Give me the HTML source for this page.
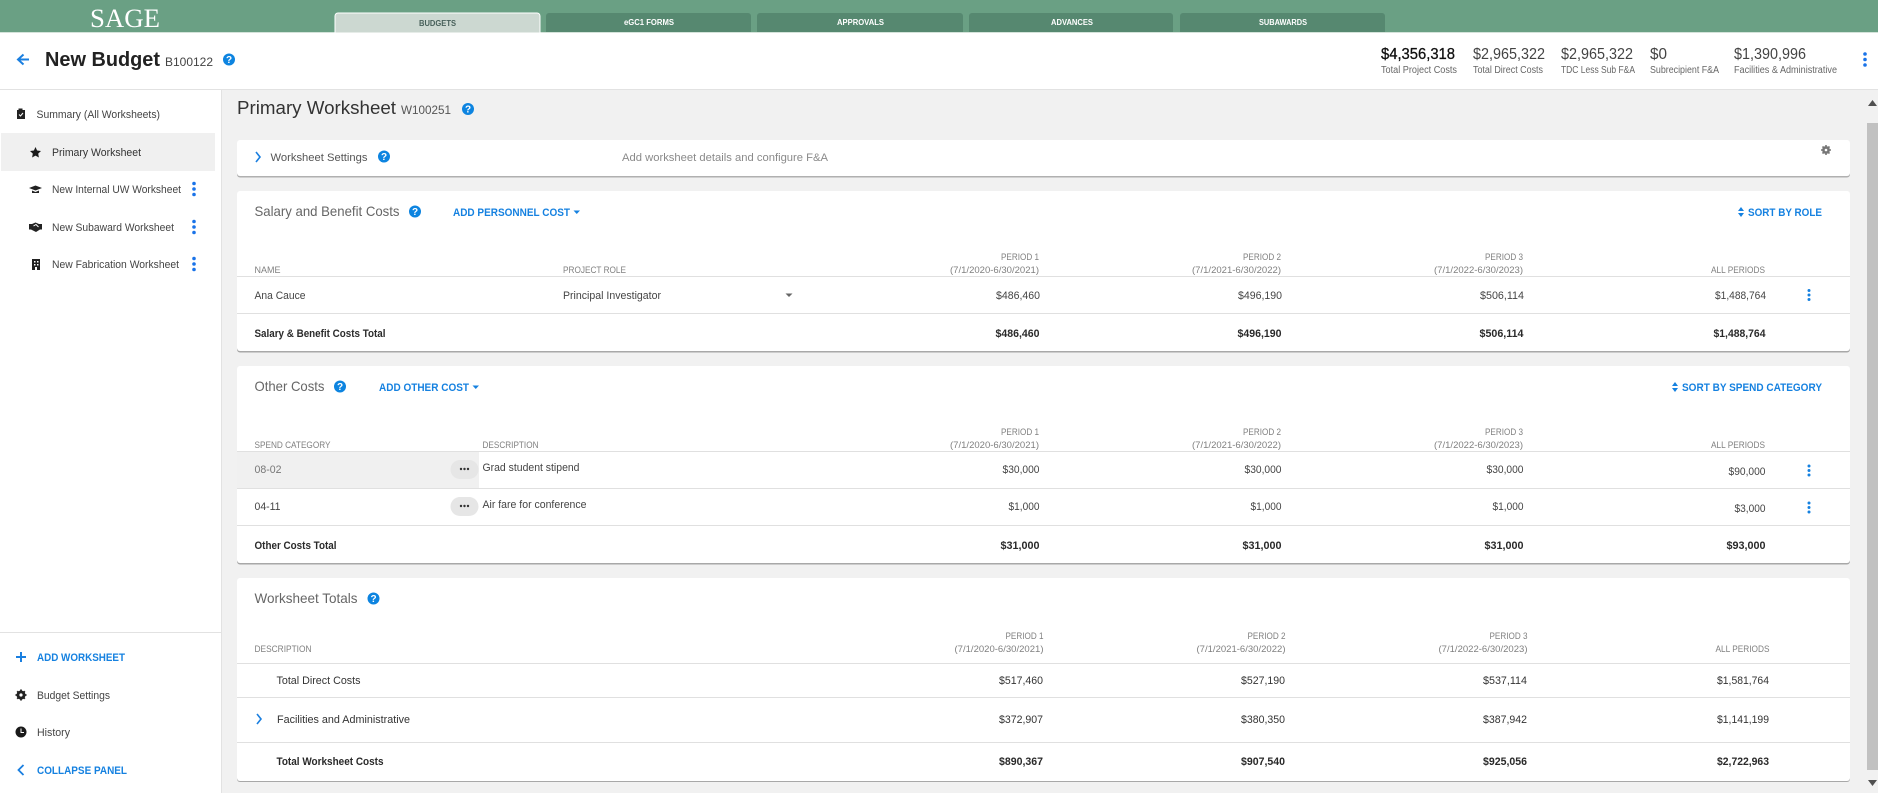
<!DOCTYPE html>
<html lang="en">
<head>
<meta charset="utf-8">
<title>SAGE Budget</title>
<style>
html,body{margin:0;padding:0;background:#f1f1f1;width:1878px;height:793px;overflow:hidden}
svg{display:block}
text{font-family:"Liberation Sans",Arial,sans-serif;fill:#444;font-size:11px}
.h{fill:#808080;font-size:9.5px}
.b{font-weight:bold;fill:#2a2a2a}
.v{fill:#444}
.l{fill:#1581e0;font-weight:bold;font-size:11px}
.t{fill:#666;font-size:14px}
.tab{fill:#fff;font-weight:bold;font-size:8px}
.s{fill:#222;font-size:16px}
.sl{fill:#666;font-size:10px}
.n{fill:#333;font-size:11px}
.q{fill:#fff;font-weight:bold;font-size:10px;text-anchor:middle}
</style>
</head>
<body>
<svg xmlns="http://www.w3.org/2000/svg" width="1878" height="793" viewBox="0 0 1878 793">
<defs>
<g id="keb"><circle cx="0" cy="-5.5" r="1.8"/><circle cx="0" cy="0" r="1.8"/><circle cx="0" cy="5.5" r="1.8"/></g>
<g id="keb2"><circle cx="0" cy="-4.5" r="1.5"/><circle cx="0" cy="0" r="1.5"/><circle cx="0" cy="4.5" r="1.5"/></g>
<g id="sort"><path d="M-3 -1L0 -5L3 -1Z M-3 1L0 5L3 1Z"/></g>
</defs>

<!-- top bar -->
<rect x="0" y="0" width="1878" height="33" fill="#6aa084"/>
<rect x="0" y="32" width="1878" height="1" fill="#d4e3da"/>
<text x="90" y="27" textLength="70" lengthAdjust="spacingAndGlyphs" style="font-family:'Liberation Serif',serif;font-size:26px;fill:#fff">SAGE</text>
<path d="M335 33V16a3 3 0 0 1 3-3H537a3 3 0 0 1 3 3V33Z" fill="#ccd8d1" stroke="#fff" stroke-width="1"/>
<path d="M546 32V16a3 3 0 0 1 3-3H748a3 3 0 0 1 3 3V32Z" fill="#568870"/>
<path d="M757 32V16a3 3 0 0 1 3-3H960a3 3 0 0 1 3 3V32Z" fill="#568870"/>
<path d="M969 32V16a3 3 0 0 1 3-3H1170a3 3 0 0 1 3 3V32Z" fill="#568870"/>
<path d="M1180 32V16a3 3 0 0 1 3-3H1382a3 3 0 0 1 3 3V32Z" fill="#568870"/>
<text x="419" y="26" textLength="37" lengthAdjust="spacingAndGlyphs" style="font-size:8px;font-weight:bold;fill:#47605a">BUDGETS</text>
<text class="tab" x="624" y="25" textLength="50" lengthAdjust="spacingAndGlyphs">eGC1 FORMS</text>
<text class="tab" x="837" y="25" textLength="47" lengthAdjust="spacingAndGlyphs">APPROVALS</text>
<text class="tab" x="1051" y="25" textLength="42" lengthAdjust="spacingAndGlyphs">ADVANCES</text>
<text class="tab" x="1259" y="25" textLength="48" lengthAdjust="spacingAndGlyphs">SUBAWARDS</text>

<!-- page header -->
<rect x="0" y="33" width="1878" height="56" fill="#fff"/>
<rect x="0" y="89" width="1878" height="1" fill="#e2e2e2"/>
<path d="M29 59.5H19M23.5 54.5L18 59.5L23.5 64.5" fill="none" stroke="#1a7fe0" stroke-width="2"/>
<text x="45" y="66" textLength="115" lengthAdjust="spacingAndGlyphs" style="font-size:20px;font-weight:bold;fill:#222">New Budget</text>
<text x="165" y="66" textLength="48" lengthAdjust="spacingAndGlyphs" style="font-size:12px;fill:#444">B100122</text>
<circle cx="229" cy="59.5" r="6" fill="#0d84e0"/><text class="q" x="229" y="63">?</text>

<text class="s" x="1381" y="59" textLength="74" lengthAdjust="spacingAndGlyphs" style="fill:#111;stroke:#111;stroke-width:.3px">$4,356,318</text>
<text class="s" x="1473" y="59" textLength="72" lengthAdjust="spacingAndGlyphs" style="fill:#444">$2,965,322</text>
<text class="s" x="1561" y="59" textLength="72" lengthAdjust="spacingAndGlyphs" style="fill:#444">$2,965,322</text>
<text class="s" x="1650" y="59" textLength="17" lengthAdjust="spacingAndGlyphs" style="fill:#444">$0</text>
<text class="s" x="1734" y="59" textLength="72" lengthAdjust="spacingAndGlyphs" style="fill:#444">$1,390,996</text>
<text class="sl" x="1381" y="73" textLength="76" lengthAdjust="spacingAndGlyphs">Total Project Costs</text>
<text class="sl" x="1473" y="73" textLength="70" lengthAdjust="spacingAndGlyphs">Total Direct Costs</text>
<text class="sl" x="1561" y="73" textLength="74" lengthAdjust="spacingAndGlyphs">TDC Less Sub F&amp;A</text>
<text class="sl" x="1650" y="73" textLength="69" lengthAdjust="spacingAndGlyphs">Subrecipient F&amp;A</text>
<text class="sl" x="1734" y="73" textLength="103" lengthAdjust="spacingAndGlyphs">Facilities &amp; Administrative</text>
<use href="#keb" x="1865" y="59.5" fill="#1a73e8"/>

<!-- sidebar -->
<rect x="0" y="90" width="221" height="703" fill="#fff"/>
<rect x="221" y="90" width="1" height="703" fill="#e2e2e2"/>
<rect x="1" y="133" width="214" height="38" fill="#f0f0f0"/>
<path d="M17 110H18.5V108.5H22.5V110H25V119H17Z" fill="#222"/><path d="M19 114.5L20.5 116L23 113" fill="none" stroke="#fff" stroke-width="1"/>
<text class="n" x="36.5" y="118" textLength="123.5" lengthAdjust="spacingAndGlyphs" style="fill:#444">Summary (All Worksheets)</text>
<path d="M35.500 147L37.100 150.500L41 151L38.200 153.600L38.900 157.500L35.500 155.600L32.100 157.500L32.800 153.600L30 151L33.900 150.500Z" fill="#1a1a1a"/>
<text class="n" x="52" y="156" textLength="89" lengthAdjust="spacingAndGlyphs" style="fill:#333">Primary Worksheet</text>
<path d="M29 188L35.500 185.500L42 188L35.500 190.500Z" fill="#222"/><path d="M32 190.500V193H39V190.500L35.500 192Z" fill="#222"/>
<text class="n" x="52" y="193" textLength="129" lengthAdjust="spacingAndGlyphs" style="fill:#444">New Internal UW Worksheet</text>
<use href="#keb" x="194" y="189" fill="#1a73e8"/>
<path d="M29 224H32L35.500 222.500L39 224H42V229.500H40L36 232L31 229.500H29Z" fill="#222"/><path d="M33.500 226L36 224.500L38.500 227" fill="none" stroke="#fff" stroke-width="1"/>
<text class="n" x="52" y="231" textLength="122" lengthAdjust="spacingAndGlyphs" style="fill:#444">New Subaward Worksheet</text>
<use href="#keb" x="194" y="227" fill="#1a73e8"/>
<path d="M32 259H40V270H32Z" fill="#222"/><path d="M34 261h1.500v1.500H34zM37 261h1.500v1.500H37zM34 264h1.500v1.500H34zM37 264h1.500v1.500H37zM35 267h2v3h-2z" fill="#fff"/>
<text class="n" x="52" y="268" textLength="127" lengthAdjust="spacingAndGlyphs" style="fill:#444">New Fabrication Worksheet</text>
<use href="#keb" x="194" y="264" fill="#1a73e8"/>

<rect x="0" y="632" width="221" height="1" fill="#e2e2e2"/>
<path d="M21 652V662M16 657H26" stroke="#1a7fe0" stroke-width="2" fill="none"/>
<text class="l" x="37" y="661" textLength="88" lengthAdjust="spacingAndGlyphs">ADD WORKSHEET</text>
<circle cx="21" cy="695" r="3.300" fill="none" stroke="#222" stroke-width="2.500"/>
<path d="M21 689.500V700.500M15.500 695H26.500M17.200 691.200L24.800 698.800M24.800 691.200L17.200 698.800" stroke="#222" stroke-width="1.800"/>
<circle cx="21" cy="695" r="1.600" fill="#fff"/>
<text class="n" x="37" y="699" textLength="73" lengthAdjust="spacingAndGlyphs" style="fill:#444">Budget Settings</text>
<circle cx="21" cy="732" r="5.500" fill="#1a1a1a"/><path d="M21 728.500V732.500H24" stroke="#fff" stroke-width="1" fill="none"/>
<text class="n" x="37" y="736" textLength="33" lengthAdjust="spacingAndGlyphs" style="fill:#444">History</text>
<path d="M23.500 765L18.500 770L23.500 775" fill="none" stroke="#1a7fe0" stroke-width="1.800"/>
<text class="l" x="37" y="774" textLength="90" lengthAdjust="spacingAndGlyphs">COLLAPSE PANEL</text>

<!-- main heading -->
<text x="237" y="114" textLength="159" lengthAdjust="spacingAndGlyphs" style="font-size:18px;fill:#333">Primary Worksheet</text>
<text x="401" y="114" textLength="50" lengthAdjust="spacingAndGlyphs" style="font-size:12px;fill:#555">W100251</text>
<circle cx="468" cy="109" r="6" fill="#0d84e0"/><text class="q" x="468" y="112.500">?</text>

<!-- settings card -->
<rect x="237" y="141" width="1613" height="36.500" rx="3" fill="#b0b0b0"/>
<rect x="237" y="140" width="1613" height="36" rx="3" fill="#fff"/>
<path d="M256 152L260 157L256 162" fill="none" stroke="#1a7fe0" stroke-width="1.600"/>
<text x="270.500" y="161" textLength="97" lengthAdjust="spacingAndGlyphs" style="fill:#555">Worksheet Settings</text>
<circle cx="384" cy="156.500" r="6" fill="#0d84e0"/><text class="q" x="384" y="160">?</text>
<text x="622" y="161" textLength="206" lengthAdjust="spacingAndGlyphs" style="fill:#8a8a8a">Add worksheet details and configure F&amp;A</text>
<circle cx="1826" cy="150" r="2.800" fill="none" stroke="#777" stroke-width="2.200"/>
<path d="M1826 145V155M1821 150H1831M1822.500 146.500L1829.500 153.500M1829.500 146.500L1822.500 153.500" stroke="#777" stroke-width="1.600"/>
<circle cx="1826" cy="150" r="1.300" fill="#fff"/>

<!-- salary card -->
<rect x="237" y="192" width="1613" height="160.500" rx="3" fill="#a8a8a8"/>
<rect x="237" y="191" width="1613" height="160" rx="3" fill="#fff"/>
<text class="t" x="254.500" y="216" textLength="145" lengthAdjust="spacingAndGlyphs">Salary and Benefit Costs</text>
<circle cx="415" cy="211.500" r="6" fill="#0d84e0"/><text class="q" x="415" y="215">?</text>
<text class="l" x="453" y="216" textLength="117" lengthAdjust="spacingAndGlyphs">ADD PERSONNEL COST</text>
<path d="M573.500 210.500H580L576.750 214Z" fill="#1581e0"/>
<use href="#sort" x="1741" y="212" fill="#1581e0"/>
<text class="l" x="1748" y="216" textLength="74" lengthAdjust="spacingAndGlyphs">SORT BY ROLE</text>
<text class="h" x="254.500" y="273" textLength="26" lengthAdjust="spacingAndGlyphs">NAME</text>
<text class="h" x="563" y="273" textLength="63" lengthAdjust="spacingAndGlyphs">PROJECT ROLE</text>
<text class="h" x="1001" y="260" textLength="38" lengthAdjust="spacingAndGlyphs">PERIOD 1</text>
<text class="h" x="950" y="273" textLength="89" lengthAdjust="spacingAndGlyphs">(7/1/2020-6/30/2021)</text>
<text class="h" x="1243" y="260" textLength="38" lengthAdjust="spacingAndGlyphs">PERIOD 2</text>
<text class="h" x="1192" y="273" textLength="89" lengthAdjust="spacingAndGlyphs">(7/1/2021-6/30/2022)</text>
<text class="h" x="1485" y="260" textLength="38" lengthAdjust="spacingAndGlyphs">PERIOD 3</text>
<text class="h" x="1434" y="273" textLength="89" lengthAdjust="spacingAndGlyphs">(7/1/2022-6/30/2023)</text>
<text class="h" x="1711" y="273" textLength="54" lengthAdjust="spacingAndGlyphs">ALL PERIODS</text>
<rect x="237" y="276" width="1613" height="1" fill="#e0e0e0"/>
<text x="254.500" y="299" textLength="51" lengthAdjust="spacingAndGlyphs">Ana Cauce</text>
<text x="563" y="299" textLength="98" lengthAdjust="spacingAndGlyphs">Principal Investigator</text>
<path d="M785.500 293.500H792.500L789 297Z" fill="#666"/>
<text class="v" x="996" y="299" textLength="44" lengthAdjust="spacingAndGlyphs">$486,460</text>
<text class="v" x="1238" y="299" textLength="44" lengthAdjust="spacingAndGlyphs">$496,190</text>
<text class="v" x="1480" y="299" textLength="44" lengthAdjust="spacingAndGlyphs">$506,114</text>
<text class="v" x="1715" y="299" textLength="51" lengthAdjust="spacingAndGlyphs">$1,488,764</text>
<use href="#keb2" x="1809" y="295" fill="#1581e0"/>
<rect x="237" y="313" width="1613" height="1" fill="#e0e0e0"/>
<text class="b" x="254.500" y="337" textLength="131" lengthAdjust="spacingAndGlyphs">Salary &amp; Benefit Costs Total</text>
<text class="b" x="995.500" y="337" textLength="44" lengthAdjust="spacingAndGlyphs">$486,460</text>
<text class="b" x="1237.500" y="337" textLength="44" lengthAdjust="spacingAndGlyphs">$496,190</text>
<text class="b" x="1479.500" y="337" textLength="44" lengthAdjust="spacingAndGlyphs">$506,114</text>
<text class="b" x="1713.500" y="337" textLength="52" lengthAdjust="spacingAndGlyphs">$1,488,764</text>

<!-- other costs card -->
<rect x="237" y="367" width="1613" height="197.500" rx="3" fill="#a8a8a8"/>
<rect x="237" y="366" width="1613" height="197" rx="3" fill="#fff"/>
<text class="t" x="254.500" y="391" textLength="70" lengthAdjust="spacingAndGlyphs">Other Costs</text>
<circle cx="340" cy="386.500" r="6" fill="#0d84e0"/><text class="q" x="340" y="390">?</text>
<text class="l" x="379" y="391" textLength="90" lengthAdjust="spacingAndGlyphs">ADD OTHER COST</text>
<path d="M472.500 385.500H479L475.750 389Z" fill="#1581e0"/>
<use href="#sort" x="1675" y="387" fill="#1581e0"/>
<text class="l" x="1682" y="391" textLength="140" lengthAdjust="spacingAndGlyphs">SORT BY SPEND CATEGORY</text>
<text class="h" x="254.500" y="448" textLength="76" lengthAdjust="spacingAndGlyphs">SPEND CATEGORY</text>
<text class="h" x="482.500" y="448" textLength="56" lengthAdjust="spacingAndGlyphs">DESCRIPTION</text>
<text class="h" x="1001" y="435" textLength="38" lengthAdjust="spacingAndGlyphs">PERIOD 1</text>
<text class="h" x="950" y="448" textLength="89" lengthAdjust="spacingAndGlyphs">(7/1/2020-6/30/2021)</text>
<text class="h" x="1243" y="435" textLength="38" lengthAdjust="spacingAndGlyphs">PERIOD 2</text>
<text class="h" x="1192" y="448" textLength="89" lengthAdjust="spacingAndGlyphs">(7/1/2021-6/30/2022)</text>
<text class="h" x="1485" y="435" textLength="38" lengthAdjust="spacingAndGlyphs">PERIOD 3</text>
<text class="h" x="1434" y="448" textLength="89" lengthAdjust="spacingAndGlyphs">(7/1/2022-6/30/2023)</text>
<text class="h" x="1711" y="448" textLength="54" lengthAdjust="spacingAndGlyphs">ALL PERIODS</text>
<rect x="237" y="452" width="242" height="36" fill="#f0f0f0"/>
<rect x="237" y="451" width="1613" height="1" fill="#e0e0e0"/>
<text x="254.500" y="473" textLength="27" lengthAdjust="spacingAndGlyphs" style="fill:#777">08-02</text>
<rect x="450.500" y="460" width="28" height="19" rx="9.500" fill="#e6e6e6"/>
<circle cx="461" cy="469" r="1.200" fill="#333"/><circle cx="464.500" cy="469" r="1.200" fill="#333"/><circle cx="468" cy="469" r="1.200" fill="#333"/>
<text x="482.500" y="471" textLength="97" lengthAdjust="spacingAndGlyphs">Grad student stipend</text>
<text class="v" x="1002.500" y="473" textLength="37" lengthAdjust="spacingAndGlyphs">$30,000</text>
<text class="v" x="1244.500" y="473" textLength="37" lengthAdjust="spacingAndGlyphs">$30,000</text>
<text class="v" x="1486.500" y="473" textLength="37" lengthAdjust="spacingAndGlyphs">$30,000</text>
<text class="v" x="1728.500" y="475" textLength="37" lengthAdjust="spacingAndGlyphs">$90,000</text>
<use href="#keb2" x="1809" y="470.500" fill="#1581e0"/>
<rect x="237" y="488" width="1613" height="1" fill="#e0e0e0"/>
<text x="254.500" y="510" textLength="26" lengthAdjust="spacingAndGlyphs">04-11</text>
<rect x="450.500" y="497" width="28" height="19" rx="9.500" fill="#e6e6e6"/>
<circle cx="461" cy="506" r="1.200" fill="#333"/><circle cx="464.500" cy="506" r="1.200" fill="#333"/><circle cx="468" cy="506" r="1.200" fill="#333"/>
<text x="482.500" y="508" textLength="104" lengthAdjust="spacingAndGlyphs">Air fare for conference</text>
<text class="v" x="1008.500" y="510" textLength="31" lengthAdjust="spacingAndGlyphs">$1,000</text>
<text class="v" x="1250.500" y="510" textLength="31" lengthAdjust="spacingAndGlyphs">$1,000</text>
<text class="v" x="1492.500" y="510" textLength="31" lengthAdjust="spacingAndGlyphs">$1,000</text>
<text class="v" x="1734.500" y="512" textLength="31" lengthAdjust="spacingAndGlyphs">$3,000</text>
<use href="#keb2" x="1809" y="507.500" fill="#1581e0"/>
<rect x="237" y="525" width="1613" height="1" fill="#e0e0e0"/>
<text class="b" x="254.500" y="549" textLength="82" lengthAdjust="spacingAndGlyphs">Other Costs Total</text>
<text class="b" x="1000.500" y="549" textLength="39" lengthAdjust="spacingAndGlyphs">$31,000</text>
<text class="b" x="1242.500" y="549" textLength="39" lengthAdjust="spacingAndGlyphs">$31,000</text>
<text class="b" x="1484.500" y="549" textLength="39" lengthAdjust="spacingAndGlyphs">$31,000</text>
<text class="b" x="1726.500" y="549" textLength="39" lengthAdjust="spacingAndGlyphs">$93,000</text>

<!-- totals card -->
<rect x="237" y="579" width="1613" height="203" rx="3" fill="#a8a8a8"/>
<rect x="237" y="578" width="1613" height="203" rx="3" fill="#fff"/>
<text class="t" x="254.500" y="603" textLength="103" lengthAdjust="spacingAndGlyphs">Worksheet Totals</text>
<circle cx="373.500" cy="598.500" r="6" fill="#0d84e0"/><text class="q" x="373.500" y="602">?</text>
<text class="h" x="254.500" y="652" textLength="57" lengthAdjust="spacingAndGlyphs">DESCRIPTION</text>
<text class="h" x="1005.500" y="639" textLength="38" lengthAdjust="spacingAndGlyphs">PERIOD 1</text>
<text class="h" x="954.500" y="652" textLength="89" lengthAdjust="spacingAndGlyphs">(7/1/2020-6/30/2021)</text>
<text class="h" x="1247.500" y="639" textLength="38" lengthAdjust="spacingAndGlyphs">PERIOD 2</text>
<text class="h" x="1196.500" y="652" textLength="89" lengthAdjust="spacingAndGlyphs">(7/1/2021-6/30/2022)</text>
<text class="h" x="1489.500" y="639" textLength="38" lengthAdjust="spacingAndGlyphs">PERIOD 3</text>
<text class="h" x="1438.500" y="652" textLength="89" lengthAdjust="spacingAndGlyphs">(7/1/2022-6/30/2023)</text>
<text class="h" x="1715.500" y="652" textLength="54" lengthAdjust="spacingAndGlyphs">ALL PERIODS</text>
<rect x="237" y="663" width="1613" height="1" fill="#e0e0e0"/>
<text x="276.500" y="684" textLength="84" lengthAdjust="spacingAndGlyphs" style="fill:#333">Total Direct Costs</text>
<text class="v" x="999" y="684" textLength="44" lengthAdjust="spacingAndGlyphs" style="fill:#333">$517,460</text>
<text class="v" x="1241" y="684" textLength="44" lengthAdjust="spacingAndGlyphs" style="fill:#333">$527,190</text>
<text class="v" x="1483" y="684" textLength="44" lengthAdjust="spacingAndGlyphs" style="fill:#333">$537,114</text>
<text class="v" x="1717" y="684" textLength="52" lengthAdjust="spacingAndGlyphs" style="fill:#333">$1,581,764</text>
<rect x="237" y="697" width="1613" height="1" fill="#e0e0e0"/>
<path d="M257 714L261 719L257 724" fill="none" stroke="#1a7fe0" stroke-width="1.600"/>
<text x="277" y="723" textLength="133" lengthAdjust="spacingAndGlyphs" style="fill:#333">Facilities and Administrative</text>
<text class="v" x="999" y="723" textLength="44" lengthAdjust="spacingAndGlyphs" style="fill:#333">$372,907</text>
<text class="v" x="1241" y="723" textLength="44" lengthAdjust="spacingAndGlyphs" style="fill:#333">$380,350</text>
<text class="v" x="1483" y="723" textLength="44" lengthAdjust="spacingAndGlyphs" style="fill:#333">$387,942</text>
<text class="v" x="1717" y="723" textLength="52" lengthAdjust="spacingAndGlyphs" style="fill:#333">$1,141,199</text>
<rect x="237" y="742" width="1613" height="1" fill="#e0e0e0"/>
<text x="276.500" y="765" textLength="107" lengthAdjust="spacingAndGlyphs" style="fill:#2a2a2a;font-weight:bold">Total Worksheet Costs</text>
<text class="b" x="999" y="765" textLength="44" lengthAdjust="spacingAndGlyphs">$890,367</text>
<text class="b" x="1241" y="765" textLength="44" lengthAdjust="spacingAndGlyphs">$907,540</text>
<text class="b" x="1483" y="765" textLength="44" lengthAdjust="spacingAndGlyphs">$925,056</text>
<text class="b" x="1717" y="765" textLength="52" lengthAdjust="spacingAndGlyphs">$2,722,963</text>

<!-- scrollbar -->
<rect x="1867" y="90" width="11" height="703" fill="#f1f1f1"/>
<rect x="1867" y="123" width="11" height="647" fill="#c1c1c1"/>
<path d="M1872.500 100L1877 106H1868Z" fill="#505050"/>
<path d="M1868 780H1877L1872.500 786Z" fill="#505050"/>
</svg>
</body>
</html>
